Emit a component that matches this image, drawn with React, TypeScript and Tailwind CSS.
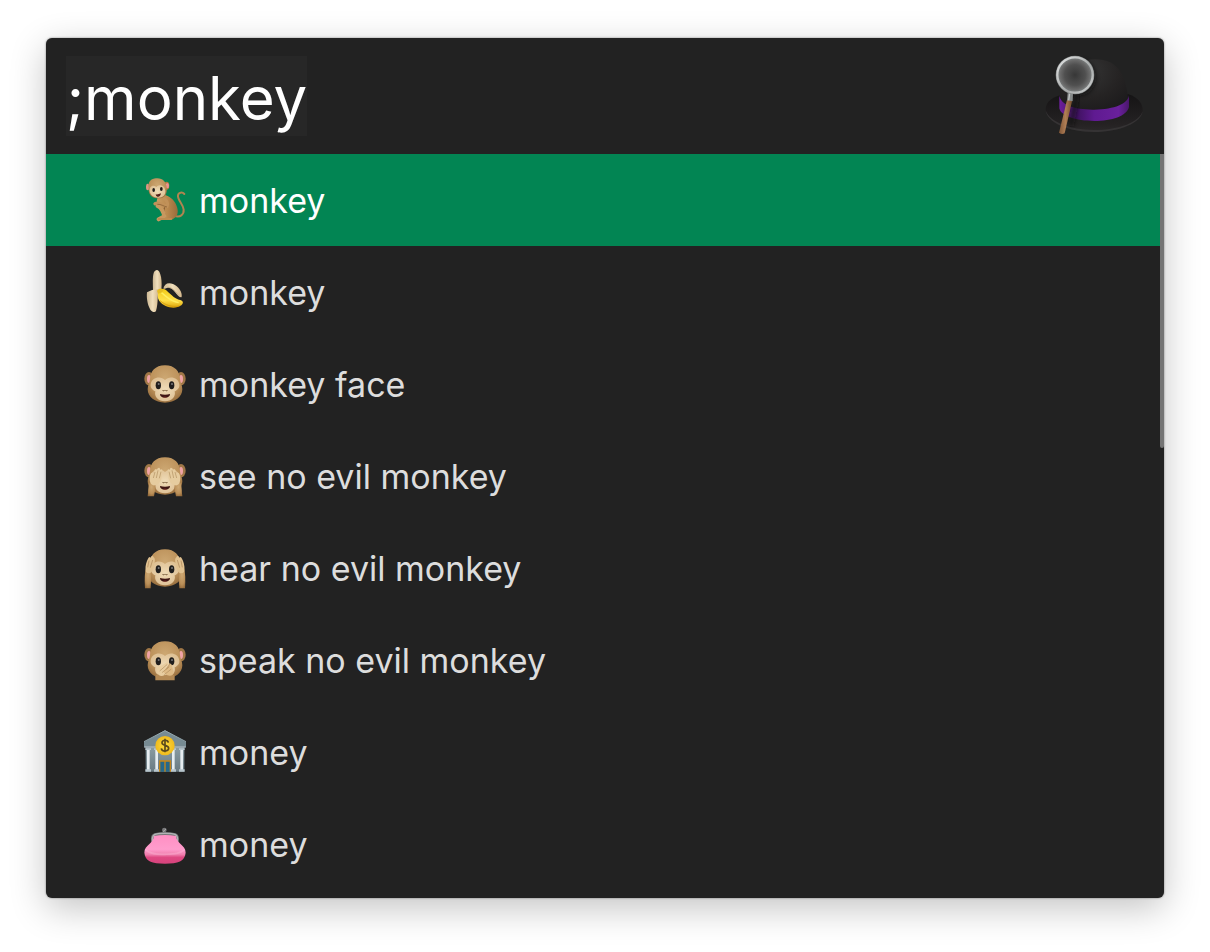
import { useState, type ReactNode } from 'react';

function HatLogo() {
  return (
    <svg viewBox="42 45 300 246" className="h-[82px] w-[100px] shrink-0" aria-hidden="true">
      <defs>
        <radialGradient id="crown" cx="0.4" cy="0.2" r="0.8">
          <stop offset="0" stopColor="#343434" />
          <stop offset="0.6" stopColor="#252323" />
          <stop offset="1" stopColor="#1b1a1b" />
        </radialGradient>
        <linearGradient id="brim" x1="0" y1="0" x2="0" y2="1">
          <stop offset="0" stopColor="#151415" />
          <stop offset="0.8" stopColor="#252223" />
          <stop offset="1" stopColor="#2b292a" />
        </linearGradient>
        <linearGradient id="band" x1="0" y1="0" x2="1" y2="0">
          <stop offset="0" stopColor="#6d1e9c" />
          <stop offset="0.25" stopColor="#3f1260" />
          <stop offset="0.5" stopColor="#5f1a91" />
          <stop offset="0.85" stopColor="#6a209c" />
          <stop offset="1" stopColor="#4a176b" />
        </linearGradient>
        <radialGradient id="glass">
          <stop offset="0" stopColor="#373737" />
          <stop offset="0.6" stopColor="#505050" />
          <stop offset="1" stopColor="#7a7a7a" />
        </radialGradient>
        <linearGradient id="rim" x1="0" y1="0" x2="1" y2="1">
          <stop offset="0" stopColor="#e2e4e4" />
          <stop offset="0.6" stopColor="#a6a9a9" />
          <stop offset="1" stopColor="#d0d2d2" />
        </linearGradient>
        <linearGradient id="handle" x1="0" y1="0" x2="1" y2="0">
          <stop offset="0" stopColor="#805637" />
          <stop offset="0.5" stopColor="#b07e55" />
          <stop offset="1" stopColor="#70492a" />
        </linearGradient>
        <filter id="soft" x="-30%" y="-30%" width="160%" height="160%">
          <feGaussianBlur stdDeviation="6" />
        </filter>
      </defs>
      <path d="M90 166C60 174 46 191 47 211c3 37 69 65 145 65 78 0 143-28 146-63 1-22-14-40-42-50z" fill="url(#brim)" />
      <path d="M47 211c3 37 69 65 145 65 78 0 143-28 146-63-9 33-70 57-145 57-76 0-136-26-146-59z" fill="#353334" />
      <path d="M88 200C90 120 110 60 195 58c72 0 96 50 101 142-24 40-180 40-208 0z" fill="url(#crown)" />
      <ellipse cx="148" cy="112" rx="50" ry="55" fill="#101010" opacity=".65" filter="url(#soft)" />
      <path d="M88 166c3 29 47 44 105 43 61-1 101-17 104-43v35c-7 27-51 42-104 42-56 0-101-16-105-38z" fill="url(#band)" />
      <path d="M142 160 122 258" stroke="#111" strokeWidth="17" opacity=".6" filter="url(#soft)" />
      <path d="M111 180h16l-23 100q-8 5-17-2z" fill="url(#handle)" />
      <path d="m113 158 16 2-1 24-17-3z" fill="#858989" />
      <path d="m119 159-3 22" stroke="#c1c5c5" strokeWidth="4" />
      <circle cx="135" cy="105" r="52" fill="url(#glass)" stroke="#727575" strokeWidth="12" />
      <circle cx="135" cy="105" r="53" fill="none" stroke="url(#rim)" strokeWidth="7" />
    </svg>
  );
}

function EmojiDefs() {
  return (
    <svg className="absolute size-0" aria-hidden="true">
      <defs>
        <radialGradient id="fur" cx="0.5" cy="0.35" r="0.7">
          <stop offset="0" stopColor="#cda873" />
          <stop offset="0.65" stopColor="#bb9059" />
          <stop offset="1" stopColor="#92693a" />
        </radialGradient>
        <radialGradient id="mask">
          <stop offset="0" stopColor="#f0dcb8" />
          <stop offset="1" stopColor="#dfc297" />
        </radialGradient>
        <linearGradient id="body" x1="0" y1="0" x2="1" y2="0">
          <stop offset="0" stopColor="#c99d65" />
          <stop offset="0.5" stopColor="#ba894e" />
          <stop offset="1" stopColor="#996b3b" />
        </linearGradient>
        <linearGradient id="peel" x1="0" y1="0" x2="1" y2="0">
          <stop offset="0" stopColor="#cdb894" />
          <stop offset="0.5" stopColor="#f0dfbd" />
          <stop offset="1" stopColor="#d3b78c" />
        </linearGradient>
        <linearGradient id="yellow" x1="0" y1="0" x2="0" y2="1">
          <stop offset="0" stopColor="#f2ca16" />
          <stop offset="0.6" stopColor="#ffe04a" />
          <stop offset="1" stopColor="#dca508" />
        </linearGradient>
        <linearGradient id="stone" x1="0" y1="0" x2="0" y2="1">
          <stop offset="0" stopColor="#8b9da4" />
          <stop offset="1" stopColor="#697a82" />
        </linearGradient>
        <radialGradient id="coin">
          <stop offset="0" stopColor="#ffdc3c" />
          <stop offset="1" stopColor="#efba1d" />
        </radialGradient>
        <linearGradient id="purse" x1="0" y1="0" x2="0" y2="1">
          <stop offset="0" stopColor="#ff8fc3" />
          <stop offset="0.5" stopColor="#ff9ccc" />
          <stop offset="0.68" stopColor="#f07fae" />
          <stop offset="0.78" stopColor="#df4983" />
          <stop offset="1" stopColor="#d6437c" />
        </linearGradient>
      </defs>
    </svg>
  );
}

function Emoji({ children }: { children: ReactNode }) {
  return (
    <svg viewBox="39 24 132 132" className="size-11 shrink-0" aria-hidden="true">
      {children}
    </svg>
  );
}

function Ears() {
  return (
    <g>
      <ellipse cx="57" cy="74" rx="14" ry="20" fill="#a07747" />
      <ellipse cx="153" cy="74" rx="14" ry="20" fill="#a07747" />
      <ellipse cx="57" cy="75" rx="6" ry="12" fill="#f0a3a6" />
      <ellipse cx="153" cy="75" rx="6" ry="12" fill="#f0a3a6" />
    </g>
  );
}

function Head() {
  return (
    <g>
      <path d="M105 34C75 34 61 53 60 75c0 9-7 18-7 31 0 22 22 40 52 40s52-18 52-40c0-13-7-22-7-31-1-22-15-41-45-41z" fill="url(#fur)" />
      <path d="M105 78c-12-14-41-9-43 14-1 10 6 16 14 20-4 16 8 30 29 30s33-14 29-30c8-4 15-10 14-20-2-23-31-28-43-14z" fill="url(#mask)" />
    </g>
  );
}

function Eyes() {
  return (
    <g>
      <ellipse cx="85" cy="94" rx="8" ry="12" fill="#201e1d" />
      <ellipse cx="125" cy="94" rx="8" ry="12" fill="#201e1d" />
      <circle cx="86" cy="90" r="3" fill="#77777a" />
      <circle cx="126" cy="90" r="3" fill="#77777a" />
    </g>
  );
}

function Mouth() {
  return (
    <g>
      <path d="M98 109q2 4 5 1m4 0q3 3 5-1" fill="none" stroke="#674928" strokeWidth="3" strokeLinecap="round" />
      <path d="M90 120q15 4 30 0c0 15-30 15-30 0z" fill="#3f1614" />
      <path d="M99 129q6-2 12 0-6 3-12 0z" fill="#963c35" />
    </g>
  );
}

function Monkey() {
  return (
    <Emoji>
      <path d="M132 137c19 8 30-4 29-18-2-18-19-29-17-43 1-9 13-11 19-4" fill="none" stroke="#b08450" strokeWidth="6" strokeLinecap="round" />
      <path d="M84 76c18-8 41 4 52 23 9 17 13 38-7 48-16 5-25-1-25-14L80 94z" fill="url(#body)" />
      <path d="M106 134c-7-12-6-24 7-27" fill="none" stroke="#76502a" strokeWidth="3" />
      <path d="M83 108c10 5 17 17 20 31l-17 9" fill="none" stroke="#c7985f" strokeWidth="12" strokeLinecap="round" strokeLinejoin="round" />
      <path d="M75 101c12-6 21 4 36 8 5-9-2-21-13-26" fill="none" stroke="#c19159" strokeWidth="10" strokeLinecap="round" strokeLinejoin="round" />
      <path d="M86 147h38" stroke="#bd8b50" strokeWidth="6" strokeLinecap="round" />
      <path d="M82 103c12-1 18 6 29 8" fill="none" stroke="#80572e" strokeWidth="2" />
      <ellipse cx="53" cy="51" rx="5" ry="10" fill="#d99684" />
      <ellipse cx="110" cy="47" rx="8" ry="12" fill="#b07c44" />
      <ellipse cx="112" cy="47" rx="5" ry="8" fill="#ed9293" />
      <path d="M78 25c-16 1-25 12-22 28-2 20 8 32 29 32 20 0 27-13 25-32-1-17-12-30-32-28z" fill="url(#fur)" />
      <path d="M79 51c-9-9-22-2-20 12 2 13 12 20 26 20 15 0 22-9 21-20-1-17-18-23-27-12z" fill="url(#mask)" />
      <ellipse cx="71" cy="60" rx="4" ry="6" fill="#201c1a" />
      <ellipse cx="94" cy="57" rx="4" ry="6" fill="#201c1a" />
      <path d="M77 73q8 1 16-3-2 12-11 10-5-1-5-7z" fill="#54201a" />
    </Emoji>
  );
}

function Banana() {
  return (
    <Emoji>
      <path d="M69 84c-1-26-1-51 5-56q8-8 14 1c7 14 8 33 6 54l-12 14z" fill="url(#peel)" />
      <path d="M82 84q8-6 22-2c16 10 25 28 49 33 7 3 8 9 1 15-18 13-50 8-66-13-5-8-8-22-6-33z" fill="url(#yellow)" />
      <path d="M94 92c14 10 26 26 52 30" fill="none" stroke="#ffee60" strokeWidth="4" />
      <path d="M90 116c17 14 36 20 58 16" fill="none" stroke="#cb9108" strokeWidth="2" />
      <path d="M51 91q16-10 35-9c-5 14 0 39-8 65-3 6-12 2-17-4-9-15-12-38-10-52z" fill="url(#peel)" />
      <path d="M100 80c2-14 14-20 29-14 16 7 29 24 26 39-3 3-8-1-12-5-10-14-18-23-29-23-5 0-8 4-14 3z" fill="url(#peel)" />
      <path d="M112 76c15-1 25 14 35 25" fill="none" stroke="#b59a73" strokeWidth="2" />
      <path d="m81 86 8-6 14 1-7 10-12 4z" fill="#e6bd22" />
    </Emoji>
  );
}

function MonkeyFace() {
  return (
    <Emoji>
      <Ears />
      <Head />
      <Eyes />
      <Mouth />
    </Emoji>
  );
}

function CoveringHand() {
  return (
    <g>
      <path d="M58 112c6-7 16-5 18 5 2 13-3 25-4 34H53c2-14 1-29 5-39z" fill="url(#fur)" />
      <path d="M62 112c-5-10-3-27 2-31q5-4 7 3l3-13q5-4 7 1l2-5q6-4 7 2l1 3q6-5 6 1l-2 20c-2 14-9 24-20 25-5 1-10-1-13-6z" fill="#e6cc9f" />
      <path d="m70 96 5-18m4 18 5-23m4 24 5-20" stroke="#b08f60" strokeWidth="2" />
    </g>
  );
}

function SeeNoEvil() {
  return (
    <Emoji>
      <Ears />
      <Head />
      <Mouth />
      <CoveringHand />
      <g transform="matrix(-1 0 0 1 210 0)">
        <CoveringHand />
      </g>
    </Emoji>
  );
}

function RaisedArm() {
  return (
    <g>
      <path d="M45 151q-3-36 3-64l16 4q1 33-2 60z" fill="url(#fur)" />
      <path d="M47 96c-2-15 3-25 7-34q4-8 7-3 7-11 10-1 7 4 1 22c-2 17-8 25-15 26-8-1-11-4-10-10z" fill="#e0c190" />
      <path d="m57 68-4 20m15-22-7 23" stroke="#aa8457" strokeWidth="2" />
    </g>
  );
}

function HearNoEvil() {
  return (
    <Emoji>
      <Head />
      <Eyes />
      <Mouth />
      <RaisedArm />
      <g transform="matrix(-1 0 0 1 210 0)">
        <RaisedArm />
      </g>
    </Emoji>
  );
}

function SpeakNoEvil() {
  return (
    <Emoji>
      <Ears />
      <Head />
      <Eyes />
      <path d="M76 151v-13c8-10 22-8 29-2 8-6 22-8 29 2v13z" fill="#b48a55" />
      <path d="M81 126c-2-10 4-18 11-18l20-12 2 7-14 13 20-12q6 0 3 8l-16 17c-3 12-23 12-26-3z" fill="#e8cda0" />
      <path d="M117 101q8-3 9 7l5 17c0 11-9 15-21 10l-10-10z" fill="#dfbb86" />
      <path d="m90 122 21-18m-14 23 20-16m-13 22 19-15m-13-1 9-14" fill="none" stroke="#b18c5e" strokeWidth="2" strokeLinecap="round" />
    </Emoji>
  );
}

function Bank() {
  return (
    <Emoji>
      <path d="M47 72h116v77H47z" fill="url(#stone)" />
      <path d="M42 60 105 25l63 35v16H42z" fill="#778b93" />
      <path d="M42 59 105 26l63 33" fill="none" stroke="#93a6ad" strokeWidth="3" />
      <path d="M43 75h124" stroke="#a4b1b8" strokeWidth="4" />
      <g fill="#e7edf0">
        <path d="M51 83h8v61h-8zm25 0h8v61h-8zm50 0h8v61h-8zm25 0h8v61h-8z" />
      </g>
      <g fill="#b8c5cc">
        <path d="M46 79h17v5H46zm26 0h17v5H72zm49 0h17v5h-17zm26 0h17v5h-17zM46 142h17v7H46zm26 0h17v7H72zm49 0h17v7h-17zm26 0h17v7h-17z" />
      </g>
      <path d="M88 117h34v32H88z" fill="#26688a" />
      <path d="M89 149v-32h32v32m-16-32v32" fill="none" stroke="#c68618" strokeWidth="4" />
      <circle cx="105" cy="71" r="29" fill="url(#coin)" />
      <path d="M115 62c-1-9-19-10-19 0 0 11 20 5 20 17 0 10-21 11-22 0M105 50v41" fill="none" stroke="#5c491c" strokeWidth="5" />
    </Emoji>
  );
}

function Purse() {
  return (
    <Emoji>
      <circle cx="103" cy="48" r="7" fill="#777779" />
      <path d="m98 54 10-9" stroke="#aaa" strokeWidth="3" />
      <path d="M65 89c-4-14-3-27 8-31q32-8 64 0c12 5 11 20 7 31z" fill="#767779" />
      <path d="M68 84c-4-24 7-26 37-26s41 2 37 26" fill="none" stroke="#b0b2b4" strokeWidth="4" />
      <path d="M72 66q33-6 66 0c0 22 29 27 29 50-2 25-23 33-62 33s-60-8-62-33c0-23 29-28 29-50z" fill="url(#purse)" />
      <path d="M46 107c14 13 31 15 59 14s44-1 59-14" fill="none" stroke="#ffc0dd" strokeWidth="5" opacity=".35" />
    </Emoji>
  );
}

const results = [
  { id: 'monkey', label: 'monkey', icon: <Monkey /> },
  { id: 'banana', label: 'monkey', icon: <Banana /> },
  { id: 'monkey-face', label: 'monkey face', icon: <MonkeyFace /> },
  { id: 'see', label: 'see no evil monkey', icon: <SeeNoEvil /> },
  { id: 'hear', label: 'hear no evil monkey', icon: <HearNoEvil /> },
  { id: 'speak', label: 'speak no evil monkey', icon: <SpeakNoEvil /> },
  { id: 'bank', label: 'money', icon: <Bank /> },
  { id: 'purse', label: 'money', icon: <Purse /> },
];

export default function App() {
  const [query, setQuery] = useState(';monkey');
  const [selected, setSelected] = useState('monkey');

  return (
    <div className="min-h-screen bg-white px-[46px] pt-[38px] pb-[54px] font-['Inter',sans-serif]">
      <EmojiDefs />
      <main className="overflow-hidden rounded-md bg-[#222222] shadow-[0_0_2px_rgba(0,0,0,0.5),0_10px_36px_rgba(0,0,0,0.24)]">
        <header className="flex items-center justify-between px-5 py-[17px]">
          <input
            type="text"
            aria-label="Search"
            value={query}
            onChange={(event) => setQuery(event.target.value)}
            className="field-sizing-content h-20 max-w-full bg-[#272727] pt-1 text-[60px] leading-[76px] font-normal text-white outline-none"
          />
          <HatLogo />
        </header>
        <div className="flex">
          <ul className="min-w-0 flex-1 pb-2">
            {results.map((result) => (
              <li key={result.id}>
                <button
                  type="button"
                  aria-pressed={selected === result.id}
                  onClick={() => setSelected(result.id)}
                  className={
                    selected === result.id
                      ? 'flex h-[92px] w-full items-center gap-3 bg-[#028553] pr-5 pl-[97px] text-left text-[34px] text-white'
                      : 'flex h-[92px] w-full items-center gap-3 pr-5 pl-[97px] text-left text-[34px] text-[#dddddd]'
                  }
                >
                  {result.icon}
                  <span className="truncate">{result.label}</span>
                </button>
              </li>
            ))}
          </ul>
          <div className="w-1" aria-hidden="true">
            <div className="h-[294px] rounded-b-xs bg-[#747474]" />
          </div>
        </div>
      </main>
    </div>
  );
}
